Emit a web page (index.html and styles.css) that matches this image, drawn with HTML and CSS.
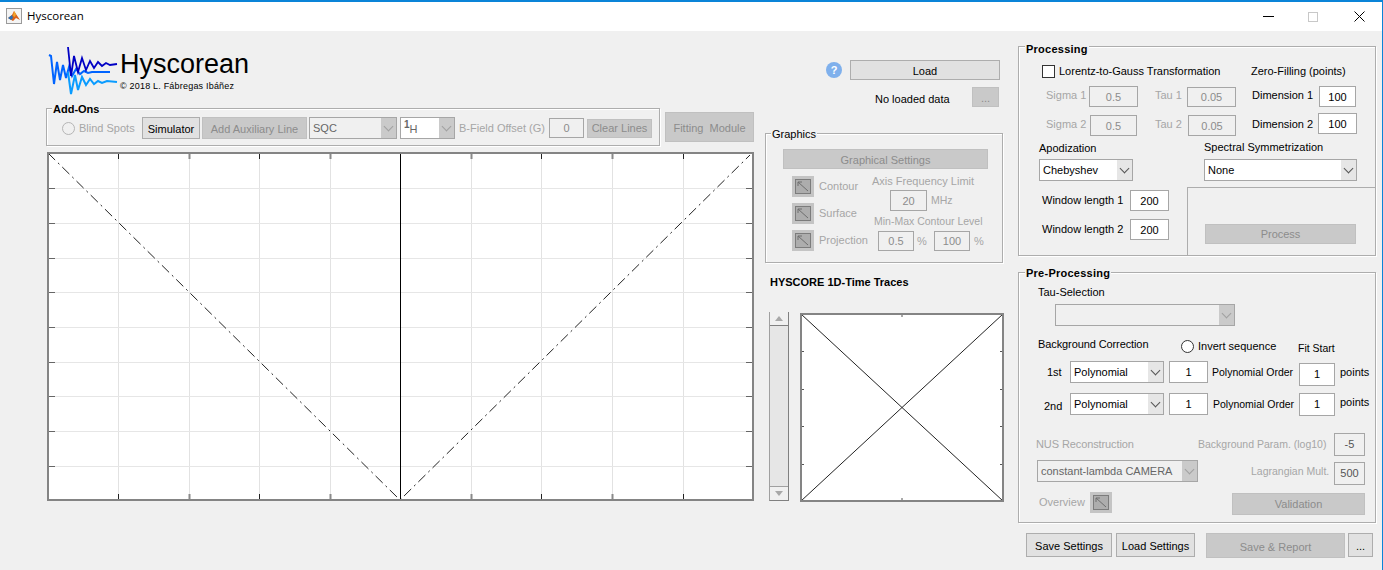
FILE: index.html
```html
<!DOCTYPE html>
<html lang="en">
<head>
  <meta charset="UTF-8">
  <title>Hyscorean</title>
  <link rel="stylesheet" href="styles.css">
</head>
<body>
  <svg class="defs" width="0" height="0">
    <symbol id="arrow-nw" viewBox="0 0 22 21">
      <rect x="0" y="0" width="22" height="21" fill="#c4c4c4"/>
      <rect x="3.5" y="3.5" width="15" height="14" fill="#adadad" stroke="#7c7c7c"/>
      <path d="M6 6 L16 15 M6 6 H10 M6 6 V10" fill="none" stroke="#6e6e6e"/>
    </symbol>
  </svg>

  <header class="titlebar">
    <svg class="app-icon" width="16" height="16" viewBox="0 0 16 16">
      <rect x="0.5" y="0.5" width="15" height="15" fill="#f4f4f4" stroke="#9a9a9a"/>
      <path d="M2 10 L6 7 L8 3 L10 6 L14 12 L10 10 L7 13 Z" fill="#d9601a"/>
      <path d="M2 10 L6 7 L7 10 L5 12 Z" fill="#2a6fb5"/>
      <path d="M8 3 L10 6 L9 9 L7 8 Z" fill="#f0a52c"/>
    </svg>
    <span class="app-name">Hyscorean</span>
    <svg class="win-min" width="11" height="1" viewBox="0 0 11 1"><rect width="11" height="1" fill="#000"/></svg>
    <svg class="win-max" width="10" height="10" viewBox="0 0 10 10"><rect x="0.5" y="0.5" width="9" height="9" fill="none" stroke="#c8c8c8"/></svg>
    <svg class="win-close" width="11" height="11" viewBox="0 0 11 11"><path d="M0.5 0.5 L10.5 10.5 M10.5 0.5 L0.5 10.5" stroke="#000" fill="none"/></svg>
  </header>

  <main class="main">
    <!-- left: logo, add-ons, main plot -->
    <section class="left">
      <div class="brand">
        <svg class="logo" width="73" height="52" viewBox="47 46 73 52">
          <polyline fill="none" stroke="#0064ff" stroke-width="2" points="49,55 51,56 54,84 57,62 60,80 63,65 66,78 69,67 72,76 76,69 80,74 84,71 88,73 92,72 110,72"/>
          <polyline fill="none" stroke="#0a9cff" stroke-width="2" points="68,72 71,94 75,75 78,90 82,77 86,85 90,79 94,84 98,81 102,83 107,81 117,82"/>
          <polyline fill="none" stroke="#0000c4" stroke-width="1.8" points="68,47 71,76 74,56 78,72 82,58 86,70 90,61 94,68 98,62 102,66 106,63 110,65 117,64"/>
        </svg>
        <div class="brand-text">
          <div class="brand-name">Hyscorean</div>
          <div class="brand-copy">© 2018 L. Fábregas Ibáñez</div>
        </div>
      </div>

      <div class="addons-row">
        <div class="group addons">
          <div class="group-title bold">Add-Ons</div>
          <div class="row addons-controls">
            <span class="radio off ml15"></span>
            <span class="lbl off ml4 w54">Blind Spots</span>
            <button class="btn ml9 w58 h22">Simulator</button>
            <button class="btn dis ml2 w105 h22">Add Auxiliary Line</button>
            <div class="select dis ml2 w88"><span>SQC</span><i class="arrow"></i></div>
            <div class="select dis white ml3 w55"><span class="nucleus"><sup>1</sup>H</span><i class="arrow"></i></div>
            <span class="lbl off ml4 w86">B-Field Offset (G)</span>
            <div class="edit dis ml4 w35 h20">0</div>
            <button class="btn dis plain ml3 w65 h19">Clear Lines</button>
          </div>
        </div>
        <button class="btn dis fitting">Fitting&nbsp; Module</button>
      </div>

      <svg class="plot" width="707" height="349" viewBox="47 152 707 349">
        <rect x="48" y="153" width="705" height="347" fill="#fff"/>
        <path d="M118.5 153V500M189.5 153V500M259.5 153V500M330.5 153V500M471.5 153V500M541.5 153V500M612.5 153V500M683.5 153V500" stroke="#e2e2e2" fill="none"/>
        <path d="M48 188.5H753M48 223.5H753M48 258.5H753M48 292.5H753M48 327.5H753M48 362.5H753M48 396.5H753M48 431.5H753M48 466.5H753" stroke="#e6e6e6" fill="none"/>
        <path d="M118.5 153v6M259.5 153v6M541.5 153v6M683.5 153v6M118.5 500v-6M259.5 500v-6M541.5 500v-6M683.5 500v-6" stroke="#222" fill="none"/>
        <path d="M189.5 153v6M330.5 153v6M471.5 153v6M612.5 153v6M189.5 500v-6M330.5 500v-6M471.5 500v-6M612.5 500v-6" stroke="#8a8a8a" stroke-width="2" fill="none"/>
        <path d="M48 188.5h7M48 223.5h7M48 258.5h7M48 292.5h7M48 327.5h7M48 362.5h7M48 396.5h7M48 431.5h7M48 466.5h7M753 188.5h-7M753 223.5h-7M753 258.5h-7M753 292.5h-7M753 327.5h-7M753 362.5h-7M753 396.5h-7M753 431.5h-7M753 466.5h-7" stroke="#666" fill="none"/>
        <path d="M400.5 153V500" stroke="#000" fill="none"/>
        <path d="M48 153 L400 500 L750 155" stroke="#222" fill="none" stroke-dasharray="10 4 2 4"/>
        <rect x="48" y="153" width="705" height="347" fill="none" stroke="#848484" stroke-width="2"/>
      </svg>
    </section>

    <!-- middle: load, graphics, time traces -->
    <section class="middle">
      <div class="row load-row">
        <span class="help">?</span>
        <button class="btn ml8 w150 h20">Load</button>
      </div>
      <div class="row status-row">
        <span class="lbl ml110 w97 down2">No loaded data</span>
        <button class="btn dis w27 h20">...</button>
      </div>

      <div class="group graphics">
        <div class="group-title">Graphics</div>
        <button class="btn dis gfx-settings">Graphical Settings</button>
        <div class="gfx-body">
          <div class="gfx-toggles">
            <div class="row gfx-toggle"><svg class="toggle"><use href="#arrow-nw"/></svg><span class="lbl off ml5">Contour</span></div>
            <div class="row gfx-toggle"><svg class="toggle"><use href="#arrow-nw"/></svg><span class="lbl off ml5">Surface</span></div>
            <div class="row gfx-toggle"><svg class="toggle"><use href="#arrow-nw"/></svg><span class="lbl off ml5">Projection</span></div>
          </div>
          <div class="gfx-limits">
            <div class="lbl off">Axis Frequency Limit</div>
            <div class="row freq-row">
              <div class="edit dis ml18 w37 h21">20</div>
              <span class="lbl off small ml4">MHz</span>
            </div>
            <div class="lbl off small level-title">Min-Max Contour Level</div>
            <div class="row level-row">
              <div class="edit dis ml6 w36 h20">0.5</div>
              <span class="lbl off ml3 w14">%</span>
              <div class="edit dis ml3 w36 h20">100</div>
              <span class="lbl off ml4">%</span>
            </div>
          </div>
        </div>
      </div>

      <div class="traces-title bold">HYSCORE 1D-Time Traces</div>
      <div class="traces">
        <div class="slider">
          <span class="slider-btn"><i class="tri-up"></i></span>
          <span class="slider-track"></span>
          <span class="slider-btn"><i class="tri-down"></i></span>
        </div>
        <svg class="mini-plot" width="204" height="190" viewBox="800 313 204 190">
          <rect x="801" y="314" width="202" height="187" fill="#fff"/>
          <path d="M801 351.5h3M801 389.5h3M801 426.5h3M801 464.5h3M1003 351.5h-3M1003 389.5h-3M1003 426.5h-3M1003 464.5h-3M902 314v3M902 501v-3" stroke="#555" fill="none"/>
          <path d="M801 314 L1003 501 M801 501 L1003 314" stroke="#222" fill="none"/>
          <rect x="801" y="314" width="202" height="187" fill="none" stroke="#848484" stroke-width="2"/>
        </svg>
      </div>
    </section>

    <!-- right: processing, pre-processing, settings -->
    <section class="right">
      <div class="group processing">
        <div class="group-title bold title-low">Processing</div>
        <div class="row lg-row">
          <span class="check ml23"></span>
          <span class="lbl ml4 w192">Lorentz-to-Gauss Transformation</span>
          <span class="lbl">Zero-Filling (points)</span>
        </div>
        <div class="row sigma-row">
          <span class="lbl off ml27 w43">Sigma 1</span>
          <div class="edit dis w49 h21">0.5</div>
          <span class="lbl off ml17 w32">Tau 1</span>
          <div class="edit dis w49 h20">0.05</div>
          <span class="lbl ml16 w67">Dimension 1</span>
          <div class="edit w37 h21">100</div>
        </div>
        <div class="row sigma-row">
          <span class="lbl off ml27 w44">Sigma 2</span>
          <div class="edit dis w47 h21">0.5</div>
          <span class="lbl off ml18 w33">Tau 2</span>
          <div class="edit dis w48 h21">0.05</div>
          <span class="lbl ml16 w66">Dimension 2</span>
          <div class="edit w39 h21 up2">100</div>
        </div>
        <div class="row apod-labels">
          <span class="lbl ml20 w165">Apodization</span>
          <span class="lbl up1">Spectral Symmetrization</span>
        </div>
        <div class="row apod-row">
          <div class="select white ml20 w94"><span>Chebyshev</span><i class="arrow"></i></div>
          <div class="select white ml71 w153"><span>None</span><i class="arrow"></i></div>
        </div>
        <div class="proc-bottom">
          <div class="windows">
            <div class="row window-row"><span class="lbl ml23 w88">Window length 1</span><div class="edit w39 h21">200</div></div>
            <div class="row window-row"><span class="lbl ml23 w88">Window length 2</span><div class="edit w39 h21">200</div></div>
          </div>
          <div class="process-panel">
            <button class="btn dis plain w151 h20">Process</button>
          </div>
        </div>
      </div>

      <div class="group preprocessing">
        <div class="group-title bold">Pre-Processing</div>
        <div class="lbl tau-title">Tau-Selection</div>
        <div class="select dis tau-select"><span></span><i class="arrow"></i></div>
        <div class="row bg-row">
          <span class="lbl tight ml19 w143 up2">Background Correction</span>
          <span class="radio"></span>
          <span class="lbl ml4 w100">Invert sequence</span>
          <span class="lbl small down2">Fit Start</span>
        </div>
        <div class="row poly-row first">
          <span class="lbl ml28 w23">1st</span>
          <div class="select white w94"><span>Polynomial</span><i class="arrow"></i></div>
          <div class="edit ml5 w39 h22">1</div>
          <span class="lbl small ml4 w87">Polynomial Order</span>
          <div class="edit w36 h23 down2">1</div>
          <span class="lbl ml5">points</span>
        </div>
        <div class="row poly-row second">
          <span class="lbl ml25 w26 down2">2nd</span>
          <div class="select white w94"><span>Polynomial</span><i class="arrow"></i></div>
          <div class="edit ml5 w39 h22">1</div>
          <span class="lbl small ml5 w86">Polynomial Order</span>
          <div class="edit w36 h23">1</div>
          <span class="lbl ml5 up2">points</span>
        </div>
        <div class="row nus-row">
          <span class="lbl off tight ml17 w162">NUS Reconstruction</span>
          <span class="lbl off small w136">Background Param. (log10)</span>
          <div class="edit dis dark w31 h23">-5</div>
        </div>
        <div class="row nus-select-row">
          <div class="select dis ml18 w161"><span>constant-lambda CAMERA</span><i class="arrow"></i></div>
          <span class="lbl off small ml53 w83">Lagrangian Mult.</span>
          <div class="edit dis dark w31 h23 down2">500</div>
        </div>
        <div class="row overview-row">
          <span class="lbl off ml20 w51">Overview</span>
          <svg class="toggle"><use href="#arrow-nw"/></svg>
          <button class="btn dis plain ml120 w133 h22 down2">Validation</button>
        </div>
      </div>

      <div class="row settings-row">
        <button class="btn w86 h24">Save Settings</button>
        <button class="btn ml4 w79 h24">Load Settings</button>
        <button class="btn dis ml11 w139 h25">Save &amp; Report</button>
        <button class="btn ml3 w25 h24">...</button>
      </div>
    </section>
  </main>
</body>
</html>
```

FILE: styles.css
```css
* {
  box-sizing: border-box;
}
html, body {
  margin: 0;
  height: 570px;
  overflow: hidden;
}
body {
  font-family: "Liberation Sans", Arial, sans-serif;
  font-size: 11px;
  color: #000;
  background: #f0f0f0;
  border-top: 2px solid #0a84d8;
  border-right: 1px solid #0a84d8;
}
.defs {
  position: absolute;
}

/* title bar */
.titlebar {
  display: flex;
  align-items: center;
  height: 29px;
  background: #fff;
  padding-left: 6px;
}
.app-icon {
  margin-top: -1px;
}
.app-name {
  font-family: "Open Sans", sans-serif;
  font-size: 11.5px;
  margin-left: 5px;
  margin-top: -2px;
}
.win-min {
  margin-left: auto;
}
.win-max {
  margin-left: 34px;
}
.win-close {
  margin-left: 36px;
  margin-right: 17px;
}

/* columns */
.main {
  display: flex;
  padding-left: 46px;
}
.left {
  width: 708px;
}
.middle {
  width: 239px;
  margin-left: 11px;
}
.right {
  width: 358px;
  margin-left: 14px;
}

/* shared bits */
.row {
  display: flex;
  align-items: center;
}
.bold {
  font-weight: bold;
}
.lbl {
  line-height: 13px;
  white-space: nowrap;
}
.small {
  font-size: 10.5px;
}
.tight {
  letter-spacing: -0.1px;
}
.off {
  color: #a6a6a6;
}
.group {
  border: 1px solid #adadad;
  box-shadow: 1px 1px 0 #fff, inset 1px 1px 0 #fff;
}
.group-title {
  display: table;
  height: 13px;
  line-height: 13px;
  margin: -6px 0 -7px 5px;
  padding: 0 1px;
  background: #f0f0f0;
}
.processing .group-title, .preprocessing .group-title {
  margin-left: 6px;
  letter-spacing: 0.25px;
}
.processing .title-low {
  margin-top: -4px;
  margin-bottom: -9px;
}
.btn {
  display: block;
  padding: 2px 0 0;
  font: inherit;
  color: #000;
  background: #e1e1e1;
  border: 1px solid #adadad;
  white-space: nowrap;
}
.btn.dis {
  color: #8c8c8c;
  background: #c9c9c9;
  border-color: #c0c0c0;
}
.btn.plain {
  padding-top: 0;
}
.edit {
  display: flex;
  align-items: center;
  justify-content: center;
  background: #fff;
  border: 1px solid #a6a6a6;
}
.edit.dis {
  background: #f0f0f0;
  color: #8c8c8c;
}
.edit.dark {
  color: #555;
}
.select {
  display: flex;
  align-items: center;
  height: 22px;
  border: 1px solid #a6a6a6;
  padding-left: 3px;
  color: #000;
}
.select span {
  flex: 1;
  white-space: nowrap;
}
.select.white {
  background: #fff;
}
.select.dis {
  color: #666;
}
.arrow {
  display: flex;
  align-items: center;
  justify-content: center;
  width: 15px;
  height: 100%;
  background: #e6e6e6;
}
.select.dis .arrow {
  background: #cacaca;
}
.arrow::after {
  content: "";
  width: 6px;
  height: 6px;
  margin-top: -3px;
  border-right: 1px solid #555;
  border-bottom: 1px solid #555;
  transform: rotate(45deg);
}
.select.dis .arrow::after {
  border-color: #a0a0a0;
}
.radio {
  width: 13px;
  height: 13px;
  flex: none;
  border: 1px solid #333;
  border-radius: 50%;
  background: #fff;
}
.radio.off {
  border-color: #b5b5b5;
  background: #f0f0f0;
}
.check {
  width: 13px;
  height: 13px;
  border: 1px solid #333;
  background: #fff;
}
.toggle {
  width: 22px;
  height: 21px;
  flex: none;
}

/* sizes and gaps used by the rows */
.ml2 { margin-left: 2px; }
.ml3 { margin-left: 3px; }
.ml4 { margin-left: 4px; }
.ml5 { margin-left: 5px; }
.ml6 { margin-left: 6px; }
.ml8 { margin-left: 8px; }
.ml9 { margin-left: 9px; }
.ml11 { margin-left: 11px; }
.ml15 { margin-left: 15px; }
.ml16 { margin-left: 16px; }
.ml17 { margin-left: 17px; }
.ml18 { margin-left: 18px; }
.ml19 { margin-left: 19px; }
.ml20 { margin-left: 20px; }
.ml23 { margin-left: 23px; }
.ml25 { margin-left: 25px; }
.ml27 { margin-left: 27px; }
.ml28 { margin-left: 28px; }
.ml53 { margin-left: 53px; }
.ml71 { margin-left: 71px; }
.ml110 { margin-left: 110px; }
.ml120 { margin-left: 120px; }
.w14 { width: 14px; }
.w23 { width: 23px; }
.w25 { width: 25px; }
.w26 { width: 26px; }
.w27 { width: 27px; }
.w31 { width: 31px; }
.w32 { width: 32px; }
.w33 { width: 33px; }
.w35 { width: 35px; }
.w36 { width: 36px; }
.w37 { width: 37px; }
.w39 { width: 39px; }
.w43 { width: 43px; }
.w44 { width: 44px; }
.w47 { width: 47px; }
.w48 { width: 48px; }
.w49 { width: 49px; }
.w51 { width: 51px; }
.w54 { width: 54px; }
.w55 { width: 55px; }
.w58 { width: 58px; }
.w65 { width: 65px; }
.w66 { width: 66px; }
.w67 { width: 67px; }
.w79 { width: 79px; }
.w83 { width: 83px; }
.w86 { width: 86px; }
.w87 { width: 87px; }
.w88 { width: 88px; }
.w94 { width: 94px; }
.w97 { width: 97px; }
.w100 { width: 100px; }
.w105 { width: 105px; }
.w133 { width: 133px; }
.w136 { width: 136px; }
.w139 { width: 139px; }
.w143 { width: 143px; }
.w150 { width: 150px; }
.w151 { width: 151px; }
.w153 { width: 153px; }
.w161 { width: 161px; }
.w162 { width: 162px; }
.w165 { width: 165px; }
.w192 { width: 192px; }
.h19 { height: 19px; }
.h20 { height: 20px; }
.h21 { height: 21px; }
.h22 { height: 22px; }
.h23 { height: 23px; }
.h24 { height: 24px; }
.h25 { height: 25px; }
/* items are centred in their row, so a 4px margin moves them 2px */
.up1 { margin-top: -2px; }
.up2 { margin-top: -4px; }
.down2 { margin-top: 4px; }

/* left column */
.brand {
  display: flex;
  align-items: flex-start;
  height: 77px;
}
.logo {
  margin-top: 15px;
  margin-left: 1px;
}
.brand-text {
  margin-top: 18px;
}
.brand-name {
  font-size: 27px;
  line-height: 30px;
}
.brand-copy {
  font-size: 9px;
  letter-spacing: 0.2px;
  line-height: 11px;
  margin-top: 2px;
}
.addons-row {
  display: flex;
  align-items: flex-start;
}
.addons {
  width: 614px;
  height: 38px;
}
.addons-controls {
  margin-top: 7px;
  height: 24px;
}
.nucleus {
  line-height: 22px;
  padding-top: 2px;
}
.nucleus sup {
  font-size: 10px;
  line-height: 0;
  font-weight: bold;
}
.fitting {
  width: 89px;
  height: 30px;
  margin-left: 5px;
  margin-top: 4px;
}
.plot {
  display: block;
  margin-top: 6px;
  margin-left: 1px;
}

/* middle column */
.load-row {
  margin-top: 29px;
  padding-left: 61px;
}
.help {
  display: flex;
  align-items: center;
  justify-content: center;
  width: 16px;
  height: 16px;
  border-radius: 50%;
  background: #7fb0ec;
  color: #fff;
  font-weight: bold;
  font-size: 11px;
}
.status-row {
  margin-top: 7px;
}
.graphics {
  width: 238px;
  height: 130px;
  margin-top: 26px;
}
.gfx-settings {
  width: 205px;
  height: 20px;
  margin-left: 17px;
  margin-top: 15px;
}
.gfx-body {
  display: flex;
  margin-top: 6px;
  padding-left: 26px;
}
.gfx-toggles {
  display: flex;
  flex-direction: column;
  gap: 6px;
  width: 80px;
  margin-top: 1px;
}
.freq-row {
  margin-top: 2px;
}
.level-title {
  margin-top: 4px;
  margin-left: 2px;
}
.level-row {
  margin-top: 3px;
}
.traces-title {
  line-height: 13px;
  margin-top: 13px;
  margin-left: 5px;
}
.traces {
  display: flex;
  align-items: flex-start;
  margin-top: 23px;
  padding-left: 4px;
}
.slider {
  display: flex;
  flex-direction: column;
  width: 20px;
  height: 189px;
  background: #e6e6e6;
  border-left: 1px solid #a0a0a0;
  border-right: 1px solid #808080;
  border-bottom: 1px solid #808080;
}
.slider-btn {
  display: flex;
  align-items: center;
  justify-content: center;
  height: 14px;
  background: #f0f0f0;
  border-bottom: 1px solid #808080;
}
.slider-btn:last-child {
  border-top: 1px solid #a0a0a0;
  border-bottom: 0;
}
.slider-track {
  flex: 1;
}
.tri-up, .tri-down {
  width: 0;
  height: 0;
  border-left: 4px solid transparent;
  border-right: 4px solid transparent;
}
.tri-up {
  border-bottom: 5px solid #a8a8a8;
}
.tri-down {
  border-top: 5px solid #a8a8a8;
}
.mini-plot {
  display: block;
  margin-left: 11px;
  margin-top: 1px;
}

/* right column */
.processing {
  height: 210px;
  margin-top: 15px;
}
.lg-row {
  height: 14px;
  margin-top: 17px;
}
.sigma-row {
  height: 21px;
  margin-top: 8px;
}
.sigma-row .lbl {
  margin-bottom: 3px;
}
.apod-labels {
  height: 13px;
  margin-top: 6px;
}
.apod-row {
  margin-top: 4px;
}
.proc-bottom {
  display: flex;
  margin-top: 6px;
}
.windows {
  display: flex;
  flex-direction: column;
  gap: 8px;
  width: 168px;
  padding-top: 3px;
}
.process-panel {
  flex: 1;
  height: 69px;
  border-left: 1px solid #adadad;
  border-top: 1px solid #adadad;
  padding: 36px 0 0 17px;
}
.preprocessing {
  height: 251px;
  margin-top: 16px;
}
.tau-title {
  margin-top: 13px;
  margin-left: 19px;
}
.tau-select {
  width: 180px;
  margin-top: 5px;
  margin-left: 36px;
}
.bg-row {
  height: 16px;
  margin-top: 12px;
}
.poly-row {
  height: 22px;
}
.poly-row.first {
  margin-top: 7px;
}
.poly-row.second {
  margin-top: 10px;
}
.nus-row {
  height: 22px;
  margin-top: 18px;
}
.nus-select-row {
  height: 22px;
  margin-top: 5px;
}
.overview-row {
  height: 22px;
  margin-top: 9px;
}
.settings-row {
  margin-top: 10px;
  padding-left: 8px;
  align-items: flex-start;
}
```
